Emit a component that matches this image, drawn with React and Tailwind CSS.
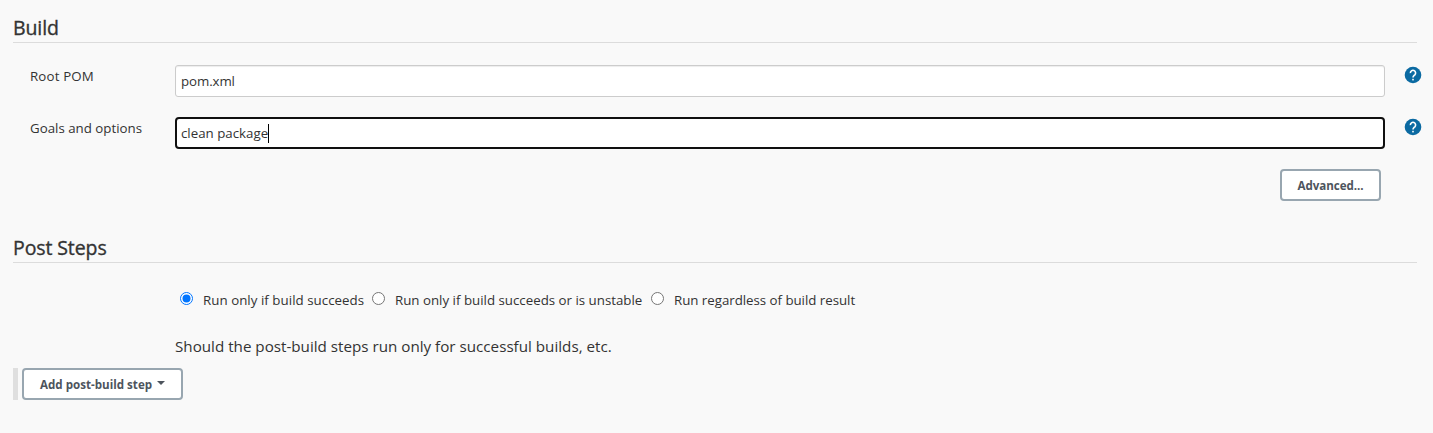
import React from "react";

function SectionTitle({ children }) {
  return (
    <h2 className="ml-[13px] mr-4 flex h-[30px] items-center border-b border-[#dcdcdc] text-[19.5px] leading-[30px] tracking-[-0.1px] whitespace-nowrap [-webkit-text-stroke:0.35px_#333]">
      {children}
    </h2>
  );
}

function HelpIcon() {
  return (
    <svg className="ml-5 mt-[2px] h-4 w-4 shrink-0 overflow-visible" viewBox="0 0 16 16" aria-label="Help">
      <circle cx="8" cy="8" r="8.3" fill="#0b6aa2" />
      <path d="M5.4 6.1a2.6 2.6 0 1 1 4.4 1.7C8.8 8.7 8 9.1 8 10.6" fill="none" stroke="#fff" strokeWidth="1.6" />
      <rect x="7.2" y="11.8" width="1.6" height="1.6" fill="#fff" />
    </svg>
  );
}

function Field({ label, children }) {
  return (
    <div className="flex h-8 items-start">
      <div className="h-8 w-[175px] shrink-0 pl-[30px] text-[13.3px] leading-[22px] whitespace-nowrap">{label}</div>
      {children}
      <HelpIcon />
    </div>
  );
}

function Radio({ checked }) {
  return (
    <svg className="mt-[2px] h-[13px] w-[13px] shrink-0" viewBox="0 0 13 13">
      <circle cx="6.5" cy="6.5" r="6" fill="#fff" stroke={checked ? "#0075ff" : "#767676"} />
      {checked && <circle cx="6.5" cy="6.5" r="4" fill="#0075ff" />}
    </svg>
  );
}

export default function App() {
  return (
    <main className="h-[433px] w-[1433px] overflow-hidden bg-[#f9f9f9] pt-[13px] font-['Open_Sans','Noto_Sans',sans-serif] text-[#333]">
      <SectionTitle><span>Build</span></SectionTitle>

      <div className="mt-[22px] flex flex-col gap-5">
        <Field label={<span className="tracking-[0.15px]">Root POM</span>}>
          <div className="flex h-8 w-[1210px] items-center rounded-[3px] border border-[#ccc] bg-white pt-[2px] pl-[5px] text-[13.3px] tracking-[-0.1px] shadow-[inset_0_1px_1px_rgba(0,0,0,0.075)]">
            <span>pom.xml</span>
          </div>
        </Field>
        <Field label={<span>Goals and options</span>}>
          <div className="flex h-8 w-[1210px] items-center rounded-[4px] border-2 border-[#101010] bg-white pl-1 text-[13.3px]">
            <span className="pt-[2px]">clean package</span>
            <i className="h-[19px] w-px bg-black" />
          </div>
        </Field>
      </div>

      <div className="mt-5 flex justify-end pr-[52px]">
        <button className="flex h-8 w-[101px] items-center justify-center rounded-[4px] border-2 border-[#98a6b0] bg-white pt-[2px] text-[11.6px] font-bold tracking-[-0.05px] text-[#4d545d]">
          <span>Advanced...</span>
        </button>
      </div>

      <div className="mt-8">
        <SectionTitle><span>Post Steps</span></SectionTitle>
      </div>

      <div className="mt-[27px] flex h-5 items-start pl-[180px] text-[13.3px] leading-5 whitespace-nowrap">
        <div className="flex w-[192px] gap-[10px]"><Radio checked /><span className="tracking-[0.04px]">Run only if build succeeds</span></div>
        <div className="flex w-[279px] gap-[10px]"><Radio /><span>Run only if build succeeds or is unstable</span></div>
        <div className="flex gap-[10px]"><Radio /><span className="tracking-[-0.03px]">Run regardless of build result</span></div>
      </div>

      <p className="mt-6 flex h-6 items-center pl-[175px] text-[15.2px] leading-6 whitespace-nowrap">
        <span>Should the post-build steps run only for successful builds, etc.</span>
      </p>

      <div className="mt-[10px] ml-[13px] flex h-8 gap-1">
        <div className="w-[5px] bg-[#dfdfdf]" />
        <button className="flex w-[161px] items-center rounded-[4px] border-2 border-[#98a6b0] bg-white pl-4 text-[11.6px] font-bold whitespace-nowrap text-[#4d545d]">
          <span className="pt-[2px]">Add post-build step</span>
          <svg className="-mt-[2px] ml-[5px] h-1 w-2" viewBox="0 0 8 4"><path d="M0 0h8L4 4z" fill="#4d545d" /></svg>
        </button>
      </div>
    </main>
  );
}
